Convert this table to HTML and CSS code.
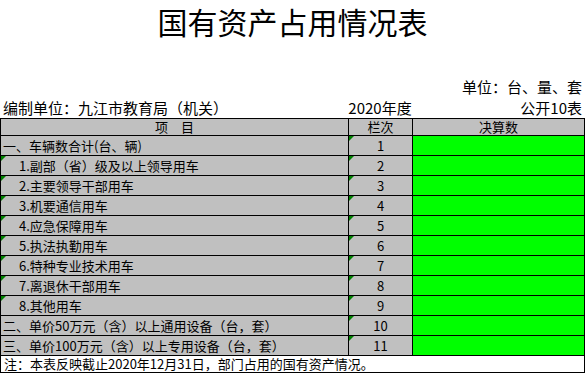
FILE: index.html
```html
<!DOCTYPE html>
<html lang="zh">
<head>
<meta charset="utf-8">
<link rel="stylesheet" href="styles.css">
</head>
<body>
<div class="page">
  <h1 class="title">国有资产占用情况表</h1>
  <div class="unit-line">单位：台、量、套</div>
  <div class="meta">
    <span class="org">编制单位：九江市教育局（机关）</span>
    <span class="year">2020年度</span>
    <span class="code">公开10表</span>
  </div>
  <div class="sheet">
    <div class="cell head">项　目</div>
    <div class="cell head">栏次</div>
    <div class="cell head">决算数</div>

    <div class="cell label">一、车辆数合计(台、辆)</div>
    <div class="cell num mark">1</div>
    <div class="cell val"></div>

    <div class="cell label sub mark">1.副部（省）级及以上领导用车</div>
    <div class="cell num mark">2</div>
    <div class="cell val"></div>

    <div class="cell label sub mark">2.主要领导干部用车</div>
    <div class="cell num mark">3</div>
    <div class="cell val"></div>

    <div class="cell label sub mark">3.机要通信用车</div>
    <div class="cell num mark">4</div>
    <div class="cell val"></div>

    <div class="cell label sub mark">4.应急保障用车</div>
    <div class="cell num mark">5</div>
    <div class="cell val"></div>

    <div class="cell label sub mark">5.执法执勤用车</div>
    <div class="cell num mark">6</div>
    <div class="cell val"></div>

    <div class="cell label sub mark">6.特种专业技术用车</div>
    <div class="cell num mark">7</div>
    <div class="cell val"></div>

    <div class="cell label sub mark">7.离退休干部用车</div>
    <div class="cell num mark">8</div>
    <div class="cell val"></div>

    <div class="cell label sub mark">8.其他用车</div>
    <div class="cell num mark">9</div>
    <div class="cell val"></div>

    <div class="cell label">二、单价50万元（含）以上通用设备（台，套）</div>
    <div class="cell num mark">10</div>
    <div class="cell val"></div>

    <div class="cell label">三、单价100万元（含）以上专用设备（台，套）</div>
    <div class="cell num mark">11</div>
    <div class="cell val"></div>

    <div class="cell note">注：本表反映截止2020年12月31日，部门占用的国有资产情况。</div>
  </div>
</div>
</body>
</html>
```

FILE: styles.css
```css
html, body {
  margin: 0;
  padding: 0;
  background: #ffffff;
}
body {
  font-family: "Noto Sans CJK SC", "Noto Sans", sans-serif;
  color: #000000;
}
.page {
  width: 585px;
}
.title {
  margin: 0;
  height: 42px;
  font-size: 30px;
  font-weight: normal;
  line-height: 42px;
  text-align: center;
}
.unit-line {
  margin-top: 35px;
  height: 20px;
  font-size: 15px;
  line-height: 20px;
  text-align: right;
  padding-right: 3px;
}
.meta {
  display: grid;
  grid-template-columns: 348px 64px 1fr;
  height: 21px;
  font-size: 15px;
  line-height: 21px;
}
.org {
  padding-left: 3px;
}
.year {
  text-align: center;
}
.code {
  text-align: right;
  padding-right: 3px;
}
.sheet {
  display: grid;
  grid-template-columns: 347px 63px 171px;
  grid-template-rows: 16px repeat(11, 19px) 16px;
  gap: 1px;
  padding: 1px;
  background: #000000;
  font-size: 13px;
}
.cell {
  position: relative;
  background: #c0c0c0;
  line-height: 19px;
  white-space: nowrap;
}
.head {
  line-height: 16px;
  text-align: center;
}
.label {
  padding-left: 2px;
}
.label.sub {
  padding-left: 18px;
}
.num {
  text-align: center;
}
.val {
  background: #00ff00;
}
.note {
  grid-column: 1 / 4;
  background: #ffffff;
  line-height: 16px;
  padding-left: 3px;
}
.mark::before {
  content: "";
  position: absolute;
  left: 0;
  top: 0;
  width: 0;
  height: 0;
  border-top: 5px solid #008000;
  border-right: 5px solid transparent;
}
```
